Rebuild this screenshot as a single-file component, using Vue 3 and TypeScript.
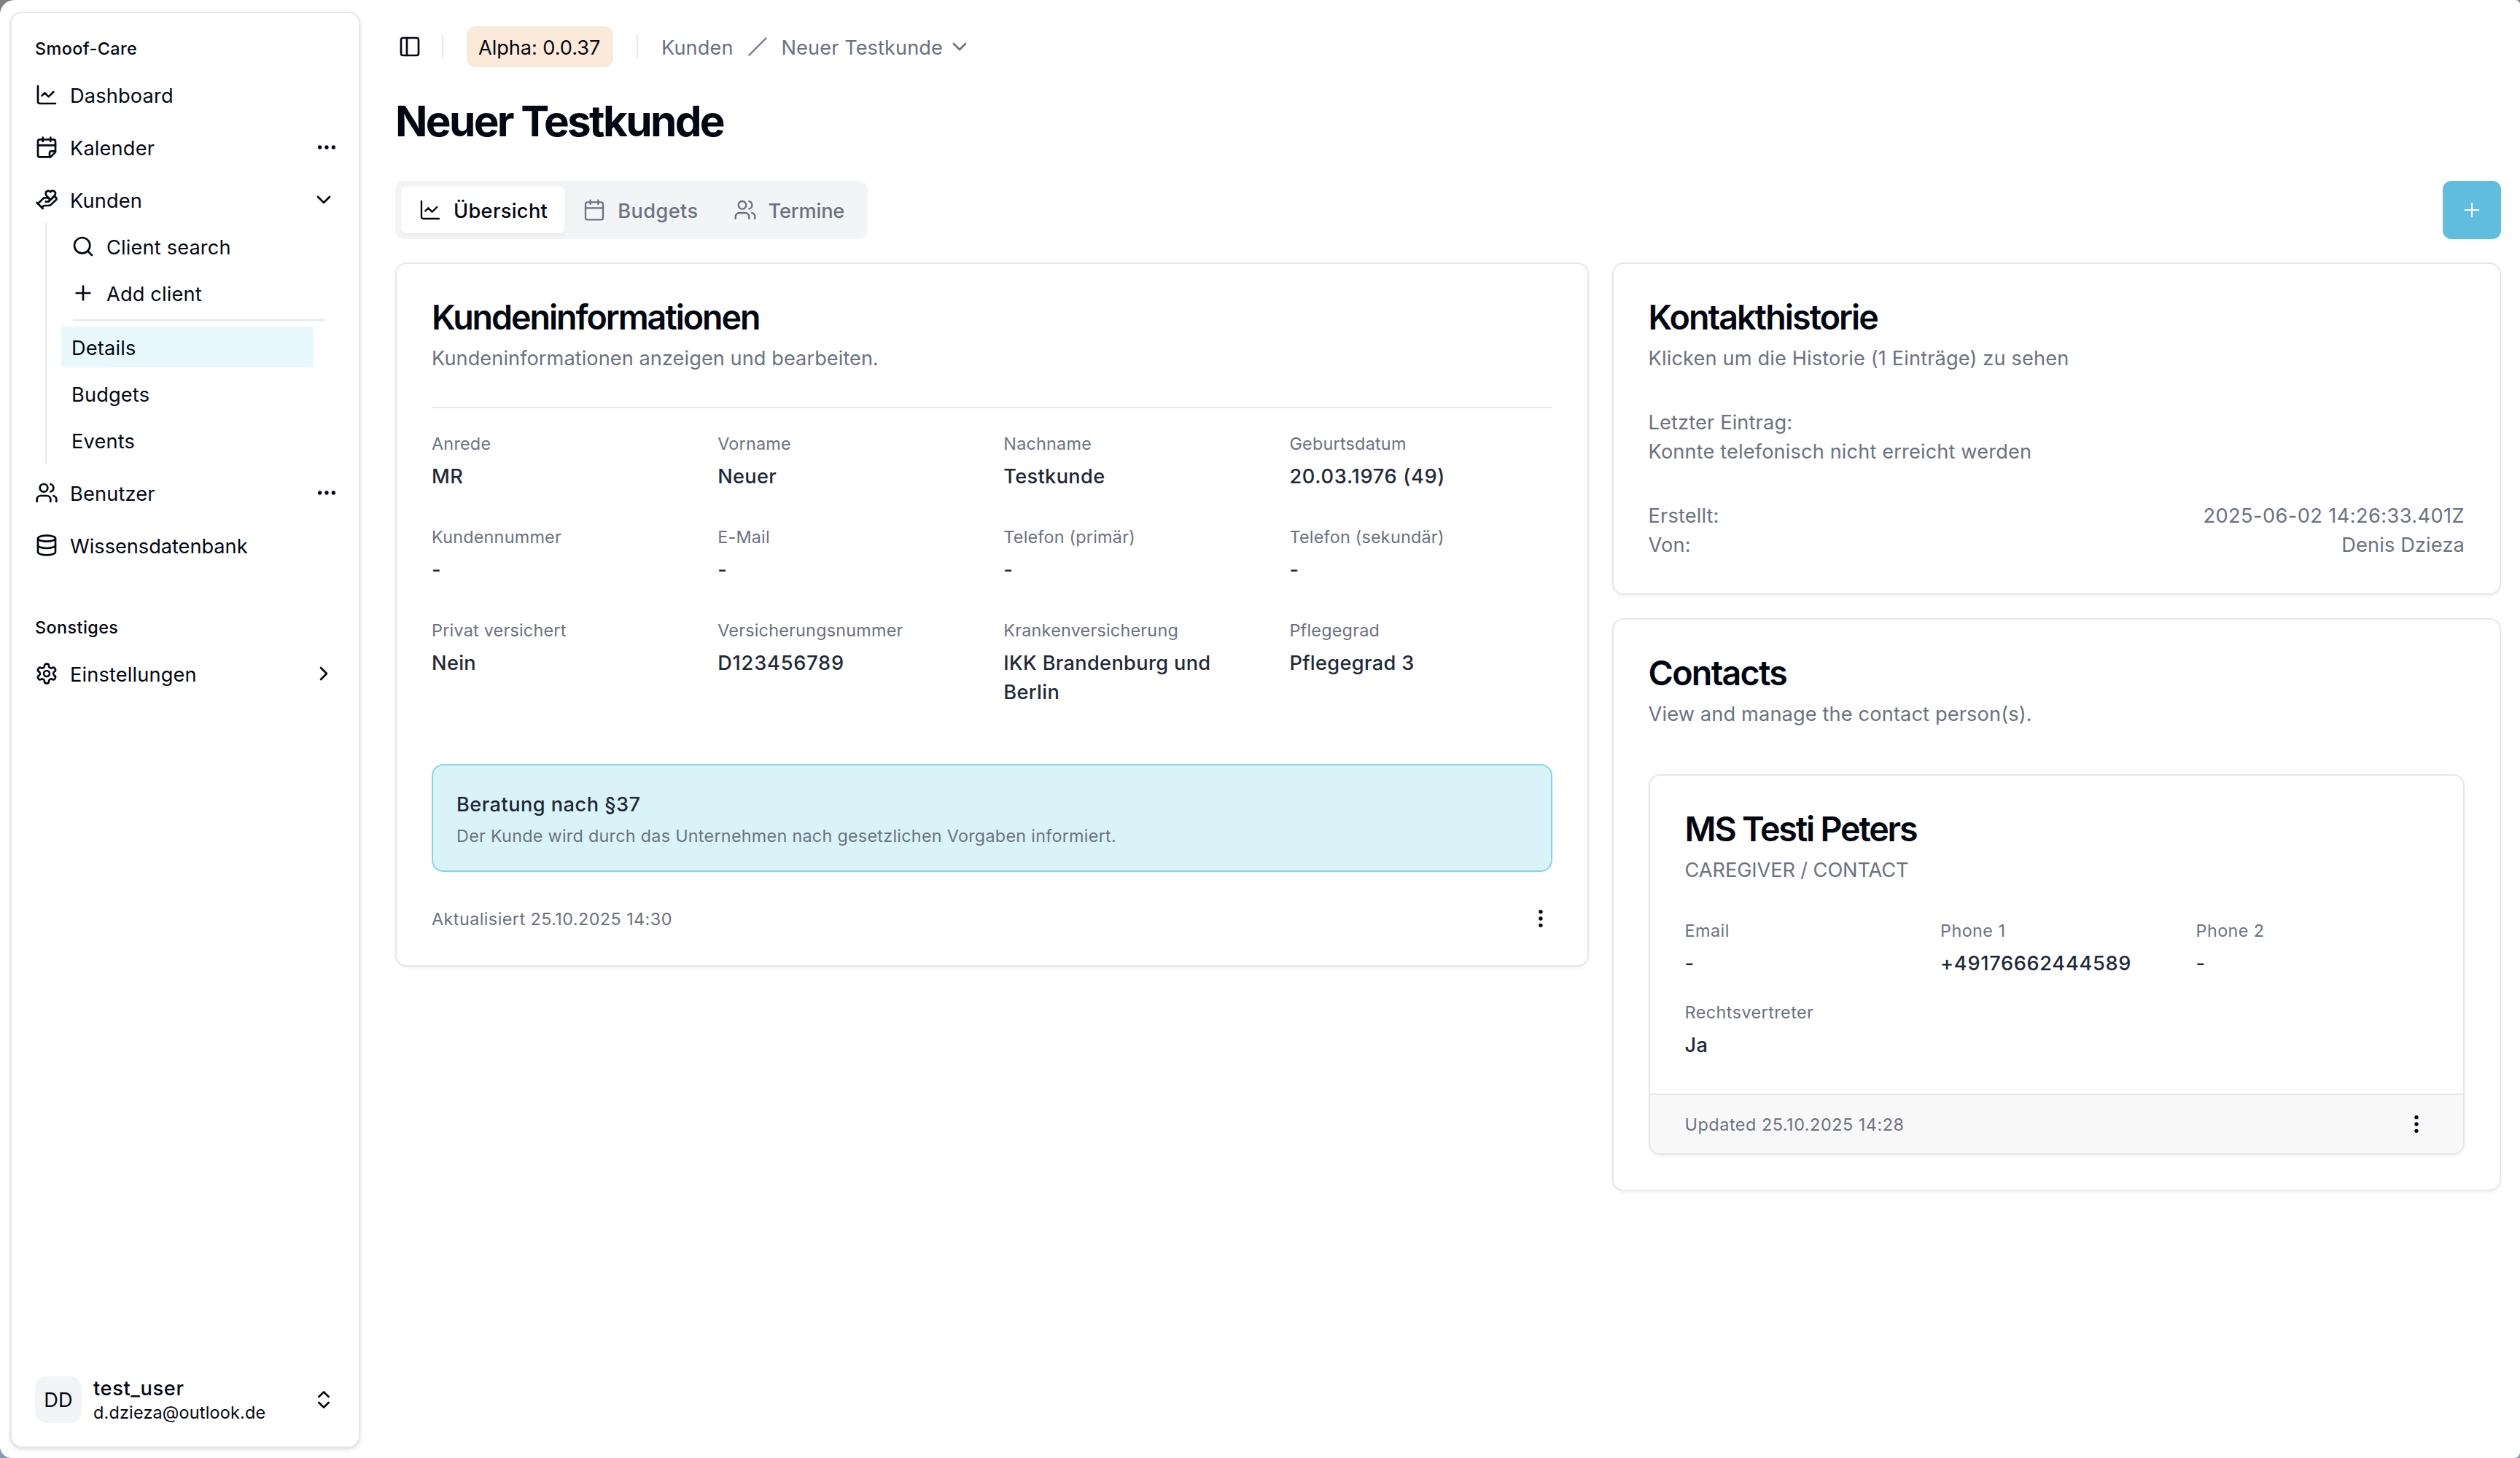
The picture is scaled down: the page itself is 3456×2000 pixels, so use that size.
<script setup lang="ts">
import { h, type FunctionalComponent } from 'vue'

type Shape = [string, Record<string, string | number>]
const p = (d: string): Shape => ['path', { d }]
const c = (cx: number, cy: number, r: number): Shape => ['circle', { cx, cy, r }]

const shapes: Record<string, Shape[]> = {
  chart: [p('M3 3v16a2 2 0 0 0 2 2h16'), p('m19 9-5 5-4-4-3 3')],
  calendarFold: [
    p('M8 2v4'), p('M16 2v4'),
    p('M21 17V6a2 2 0 0 0-2-2H5a2 2 0 0 0-2 2v14a2 2 0 0 0 2 2h11Z'),
    p('M3 10h18'), p('M15 22v-4a2 2 0 0 1 2-2h4'),
  ],
  calendar: [p('M8 2v4'), p('M16 2v4'), ['rect', { x: 3, y: 4, width: 18, height: 18, rx: 2 }], p('M3 10h18')],
  handHeart: [
    p('M11 14h2a2 2 0 1 0 0-4h-3c-.6 0-1.1.2-1.4.6L3 16'),
    p('m7 20 1.6-1.4c.3-.4.8-.6 1.4-.6h4c1.1 0 2.1-.4 2.8-1.2l4.6-4.4a2 2 0 0 0-2.75-2.91l-4.2 3.9'),
    p('m2 15 6 6'),
    p('M19.5 8.5c.7-.7 1.5-1.6 1.5-2.7A2.73 2.73 0 0 0 16 4a2.78 2.78 0 0 0-5 1.8c0 1.2.8 2 1.5 2.8L16 12Z'),
  ],
  users: [
    p('M16 21v-2a4 4 0 0 0-4-4H6a4 4 0 0 0-4 4v2'), c(9, 7, 4),
    p('M22 21v-2a4 4 0 0 0-3-3.87'), p('M16 3.13a4 4 0 0 1 0 7.75'),
  ],
  database: [['ellipse', { cx: 12, cy: 5, rx: 9, ry: 3 }], p('M3 5V19A9 3 0 0 0 21 19V5'), p('M3 12A9 3 0 0 0 21 12')],
  settings: [
    p('M12.22 2h-.44a2 2 0 0 0-2 2v.18a2 2 0 0 1-1 1.73l-.43.25a2 2 0 0 1-2 0l-.15-.08a2 2 0 0 0-2.73.73l-.22.38a2 2 0 0 0 .73 2.73l.15.1a2 2 0 0 1 1 1.72v.51a2 2 0 0 1-1 1.74l-.15.09a2 2 0 0 0-.73 2.73l.22.38a2 2 0 0 0 2.73.73l.15-.08a2 2 0 0 1 2 0l.43.25a2 2 0 0 1 1 1.73V20a2 2 0 0 0 2 2h.44a2 2 0 0 0 2-2v-.18a2 2 0 0 1 1-1.73l.43-.25a2 2 0 0 1 2 0l.15.08a2 2 0 0 0 2.73-.73l.22-.39a2 2 0 0 0-.73-2.73l-.15-.08a2 2 0 0 1-1-1.74v-.5a2 2 0 0 1 1-1.74l.15-.09a2 2 0 0 0 .73-2.73l-.22-.38a2 2 0 0 0-2.73-.73l-.15.08a2 2 0 0 1-2 0l-.43-.25a2 2 0 0 1-1-1.73V4a2 2 0 0 0-2-2z'),
    c(12, 12, 3),
  ],
  panel: [['rect', { x: 3, y: 3, width: 18, height: 18, rx: 2 }], p('M9 3v18')],
  search: [c(11, 11, 8), p('m21 21-4.3-4.3')],
  plus: [p('M5 12h14'), p('M12 5v14')],
  slash: [p('M22 2 2 22')],
  chevronDown: [p('m6 9 6 6 6-6')],
  chevronRight: [p('m9 18 6-6-6-6')],
  chevronsUpDown: [p('m7 15 5 5 5-5'), p('m7 9 5-5 5 5')],
  dots: [c(5, 12, 1), c(12, 12, 1), c(19, 12, 1)],
  dotsVertical: [c(12, 5, 1), c(12, 12, 1), c(12, 19, 1)],
}

const Icon: FunctionalComponent<{ name: string }> = (props) =>
  h(
    'svg',
    {
      viewBox: '0 0 24 24', width: 32, height: 32, fill: 'none', stroke: 'currentColor',
      'stroke-width': 2, 'stroke-linecap': 'round', 'stroke-linejoin': 'round',
    },
    (shapes[props.name] ?? []).map(([tag, attrs]) => h(tag, attrs)),
  )
Icon.props = ['name']

const customer = [
  { label: 'Anrede', value: 'MR' },
  { label: 'Vorname', value: 'Neuer' },
  { label: 'Nachname', value: 'Testkunde' },
  { label: 'Geburtsdatum', value: '20.03.1976 (49)', kind: 'date' },
  { label: 'Kundennummer', value: '-' },
  { label: 'E-Mail', value: '-' },
  { label: 'Telefon (primär)', value: '-' },
  { label: 'Telefon (sekundär)', value: '-' },
  { label: 'Privat versichert', value: 'Nein' },
  { label: 'Versicherungsnummer', value: 'D123456789', kind: 'id' },
  { label: 'Krankenversicherung', value: 'IKK Brandenburg und Berlin' },
  { label: 'Pflegegrad', value: 'Pflegegrad 3' },
]

const contact = [
  { label: 'Email', value: '-' },
  { label: 'Phone 1', value: '+49176662444589', kind: 'date' },
  { label: 'Phone 2', value: '-' },
  { label: 'Rechtsvertreter', value: 'Ja' },
]
</script>

<template>
  <div class="window">
    <div class="app">
      <aside class="sidebar">
        <nav class="groups">
          <div class="group-label">Smoof-Care</div>
          <ul class="menu">
            <li class="item"><Icon name="chart" /><span>Dashboard</span></li>
            <li class="item"><Icon name="calendarFold" /><span>Kalender</span><Icon name="dots" class="trail action" /></li>
            <li>
              <div class="item"><Icon name="handHeart" /><span>Kunden</span><Icon name="chevronDown" class="trail" /></div>
              <ul class="submenu">
                <li class="subitem"><Icon name="search" /><span>Client search</span></li>
                <li class="subitem"><Icon name="plus" /><span>Add client</span></li>
                <li class="rule"></li>
                <li class="subitem active"><span>Details</span></li>
                <li class="subitem"><span>Budgets</span></li>
                <li class="subitem"><span>Events</span></li>
              </ul>
            </li>
            <li class="item"><Icon name="users" /><span>Benutzer</span><Icon name="dots" class="trail action" /></li>
            <li class="item"><Icon name="database" /><span class="long">Wissensdatenbank</span></li>
          </ul>
          <div class="group-label second">Sonstiges</div>
          <ul class="menu">
            <li class="item"><Icon name="settings" /><span>Einstellungen</span><Icon name="chevronRight" class="trail" /></li>
          </ul>
        </nav>
        <div class="user">
          <div class="avatar">DD</div>
          <div class="who">
            <div class="name">test_user</div>
            <div class="mail">d.dzieza@outlook.de</div>
          </div>
          <Icon name="chevronsUpDown" class="trail" />
        </div>
      </aside>

      <main class="main">
        <header class="topbar">
          <Icon name="panel" />
          <span class="divider"></span>
          <span class="badge">Alpha: 0.0.37</span>
          <span class="divider second"></span>
          <div class="crumbs">
            <span>Kunden</span>
            <Icon name="slash" class="slash" />
            <div class="current"><span>Neuer Testkunde</span><Icon name="chevronDown" /></div>
          </div>
        </header>

        <h1>Neuer Testkunde</h1>

        <div class="toolbar">
          <div class="tabs">
            <button class="tab on"><Icon name="chart" /><span>Übersicht</span></button>
            <button class="tab"><Icon name="calendar" /><span class="wide">Budgets</span></button>
            <button class="tab"><Icon name="users" /><span class="tight">Termine</span></button>
          </div>
          <button class="add"><Icon name="plus" /></button>
        </div>

        <div class="columns">
          <section class="card info">
            <h2>Kundeninformationen</h2>
            <p class="desc first">Kundeninformationen anzeigen und bearbeiten.</p>
            <hr />
            <dl class="fields four">
              <div v-for="f in customer" :key="f.label">
                <dt>{{ f.label }}</dt>
                <dd :class="f.kind">{{ f.value }}</dd>
              </div>
            </dl>
            <div class="notice">
              <div class="notice-title">Beratung nach §37</div>
              <div class="notice-text">Der Kunde wird durch das Unternehmen nach gesetzlichen Vorgaben informiert.</div>
            </div>
            <footer class="card-foot"><span>Aktualisiert 25.10.2025 14:30</span><Icon name="dotsVertical" /></footer>
          </section>

          <div class="side">
            <section class="card history">
              <h2>Kontakthistorie</h2>
              <p class="desc">Klicken um die Historie (1 Einträge) zu sehen</p>
              <div class="block">
                <p>Letzter Eintrag:</p>
                <p>Konnte telefonisch nicht erreicht werden</p>
              </div>
              <div class="block">
                <div class="pair"><span>Erstellt:</span><span class="stamp">2025-06-02 14:26:33.401Z</span></div>
                <div class="pair"><span>Von:</span><span>Denis Dzieza</span></div>
              </div>
            </section>

            <section class="card">
              <h2 class="loose">Contacts</h2>
              <p class="desc">View and manage the contact person(s).</p>
              <article class="card person">
                <h2>MS Testi Peters</h2>
                <p class="desc caps">CAREGIVER / CONTACT</p>
                <dl class="fields three">
                  <div v-for="f in contact" :key="f.label">
                    <dt>{{ f.label }}</dt>
                    <dd :class="f.kind">{{ f.value }}</dd>
                  </div>
                </dl>
                <footer class="person-foot"><span>Updated 25.10.2025 14:28</span><Icon name="dotsVertical" /></footer>
              </article>
            </section>
          </div>
        </div>
      </main>
    </div>
  </div>
</template>

<style>
html,
body {
  margin: 0;
}
</style>

<style scoped>
* {
  box-sizing: border-box;
  margin: 0;
  padding: 0;
}
svg {
  display: block;
  flex: none;
}
ul {
  list-style: none;
}
button {
  border: 0;
  background: none;
  font: inherit;
  color: inherit;
}
.window {
  height: 2000px;
  background: linear-gradient(#808080 50%, #879ab4 50%);
  overflow: hidden;
}
.app {
  display: flex;
  height: 2000px;
  background: #fff;
  border-radius: 20px 6px 8px 16px;
  color: #030712;
  font: 400 27.2px/40px Inter, 'Liberation Sans', sans-serif;
  letter-spacing: 0.006em;
}
.sidebar {
  display: flex;
  flex-direction: column;
  flex: none;
  width: 480px;
  height: 1970px;
  margin: 16px 0 0 14px;
  padding: 16px;
  border: 2px solid #e5e7eb;
  border-radius: 16px;
  box-shadow: 0 2px 6px rgba(0, 0, 0, 0.1), 0 2px 4px -2px rgba(0, 0, 0, 0.1);
}
.groups {
  flex: 1;
}
.group-label {
  height: 64px;
  padding: 1px 16px 0;
  font-size: 23.4px;
  font-weight: 500;
  line-height: 64px;
  letter-spacing: 0.018em;
}
.group-label.second {
  margin-top: 48px;
}
.menu {
  display: flex;
  flex-direction: column;
  gap: 8px;
}
.item {
  display: flex;
  align-items: center;
  gap: 16px;
  height: 64px;
  padding: 0 16px;
}
.item span {
  padding-top: 4px;
}
.subitem span {
  padding-top: 3px;
}
.item .long {
  letter-spacing: -0.001em;
}
.trail {
  margin-left: auto;
}
.action {
  margin-right: -4px;
}
.submenu {
  display: flex;
  flex-direction: column;
  gap: 8px;
  margin-left: 30px;
  padding: 4px 0 4px 20px;
  border-left: 2px solid #e5e7eb;
}
.subitem {
  display: flex;
  align-items: center;
  gap: 16px;
  width: 346px;
  height: 56px;
  padding: 0 14px;
}
.submenu .rule {
  width: 346px;
  height: 2px;
  margin-left: 16px;
  background: #e5e7eb;
}
.active {
  background: #e9f8fd;
}
.user {
  display: flex;
  align-items: center;
  gap: 16px;
  height: 96px;
  padding: 0 16px;
}
.avatar {
  display: grid;
  place-items: center;
  width: 64px;
  height: 64px;
  padding-top: 2px;
  border-radius: 16px;
  background: #f3f4f6;
}
.name {
  font-weight: 500;
  line-height: 35px;
  letter-spacing: 0.023em;
}
.mail {
  font-size: 23.4px;
  line-height: 32px;
  letter-spacing: 0.008em;
}
.main {
  flex: 1;
  min-width: 0;
  padding: 36px 26px 0 48px;
}
.topbar {
  display: flex;
  align-items: center;
  height: 56px;
  padding-left: 4px;
}
.divider {
  width: 2px;
  height: 32px;
  margin: 0 32px 0 28px;
  background: #e5e7eb;
}
.divider.second {
  margin: 0 32px;
}
.badge {
  width: 201px;
  height: 56px;
  padding-left: 16px;
  border-radius: 12px;
  background: #fbe9d9;
  line-height: 59px;
  letter-spacing: -0.0024em;
  white-space: nowrap;
}
.crumbs {
  display: flex;
  align-items: center;
  gap: 19px;
  color: #6b7280;
  letter-spacing: 0.003em;
}
.crumbs span {
  padding-top: 3px;
}
.crumbs .slash {
  width: 28px;
  height: 28px;
  stroke-width: 1.75;
}
.current {
  display: flex;
  align-items: center;
  gap: 7px;
}
h1 {
  margin-top: 44px;
  font-size: 58.4px;
  font-weight: 700;
  line-height: 60px;
  letter-spacing: -0.0453em;
}
.toolbar {
  display: flex;
  justify-content: space-between;
  margin-top: 52px;
}
.tabs {
  display: flex;
  padding: 8px;
  border-radius: 12px;
  background: #f3f4f6;
  color: #6b7280;
}
.tab {
  display: flex;
  align-items: center;
  gap: 16px;
  height: 64px;
  padding: 0 24px;
  border-radius: 8px;
  font-weight: 500;
  letter-spacing: 0.012em;
}
.tab span {
  padding-top: 3px;
}
.tab .wide {
  letter-spacing: 0.015em;
}
.tab .tight {
  letter-spacing: -0.006em;
}
.tab svg {
  stroke-width: 1.75;
}
.tab.on {
  background: #fff;
  color: #030712;
  box-shadow: 0 2px 4px rgba(0, 0, 0, 0.05);
}
.add {
  display: grid;
  place-items: center;
  width: 80px;
  height: 80px;
  border-radius: 12px;
  background: #60bddf;
  color: #fff;
}
.add svg {
  stroke-width: 1.5;
}
.columns {
  display: grid;
  grid-template-columns: 1636.6px 1219.4px;
  align-items: start;
  gap: 32px;
  margin-top: 32px;
}
.side {
  display: flex;
  flex-direction: column;
  gap: 32px;
}
.card {
  padding: 49px 48px 48px;
  border: 2px solid #e5e7eb;
  border-radius: 16px;
  background: #fff;
  box-shadow: 0 2px 4px rgba(0, 0, 0, 0.05);
}
.history {
  padding-bottom: 46px;
}
h2 {
  font-size: 46.6px;
  font-weight: 600;
  line-height: 48px;
  letter-spacing: -0.0443em;
}
.history h2 {
  letter-spacing: -0.042em;
}
h2.loose {
  letter-spacing: -0.037em;
}
.desc {
  margin-top: 13px;
  color: #6b7280;
  letter-spacing: 0.005em;
}
.desc.first {
  letter-spacing: 0.002em;
}
.desc.caps {
  letter-spacing: -0.0036em;
}
hr {
  height: 2px;
  margin: 46px 0 33px;
  border: 0;
  background: #e5e7eb;
}
.fields {
  display: grid;
  column-gap: 32px;
}
.four {
  grid-template-columns: repeat(4, 1fr);
  row-gap: 47px;
}
.three {
  grid-template-columns: repeat(3, 1fr);
  row-gap: 31px;
  margin-top: 47px;
}
dt {
  color: #6b7280;
  font-size: 23.4px;
  line-height: 32px;
  letter-spacing: 0.009em;
}
.three dt {
  letter-spacing: 0.018em;
}
dd {
  margin-top: 9px;
  color: #1f2937;
  font-weight: 500;
  letter-spacing: 0.012em;
}
.id {
  letter-spacing: 0.029em;
}
.date {
  letter-spacing: 0.025em;
}
.notice {
  height: 148px;
  margin-top: 78px;
  padding: 34px 32px 0;
  border: 2px solid #86d5e9;
  border-radius: 16px;
  background: #daf3f9;
}
.notice-title {
  color: #1f2937;
  font-weight: 500;
  letter-spacing: 0.0167em;
}
.notice-text {
  margin-top: 7px;
  color: #6b7280;
  font-size: 23.4px;
  line-height: 32px;
  letter-spacing: 0.0107em;
}
.card-foot,
.person-foot {
  display: flex;
  justify-content: space-between;
  height: 32px;
  color: #6b7280;
  font-size: 23.4px;
  line-height: 33px;
  letter-spacing: 0.018em;
}
.card-foot {
  margin-top: 48px;
}
.card-foot svg,
.person-foot svg {
  color: #030712;
}
.block {
  margin-top: 48px;
  color: #6b7280;
  letter-spacing: 0.005em;
}
.pair {
  display: flex;
  justify-content: space-between;
}
.stamp {
  letter-spacing: 0.015em;
}
.person {
  margin-top: 62px;
  overflow: hidden;
}
.person h2 {
  letter-spacing: -0.047em;
}
.person-foot {
  height: 82px;
  margin: 46px -48px -48px;
  padding: 24px 48px;
  border-top: 2px solid #e5e7eb;
  background: #f8f8f9;
  letter-spacing: 0.0225em;
}
</style>
